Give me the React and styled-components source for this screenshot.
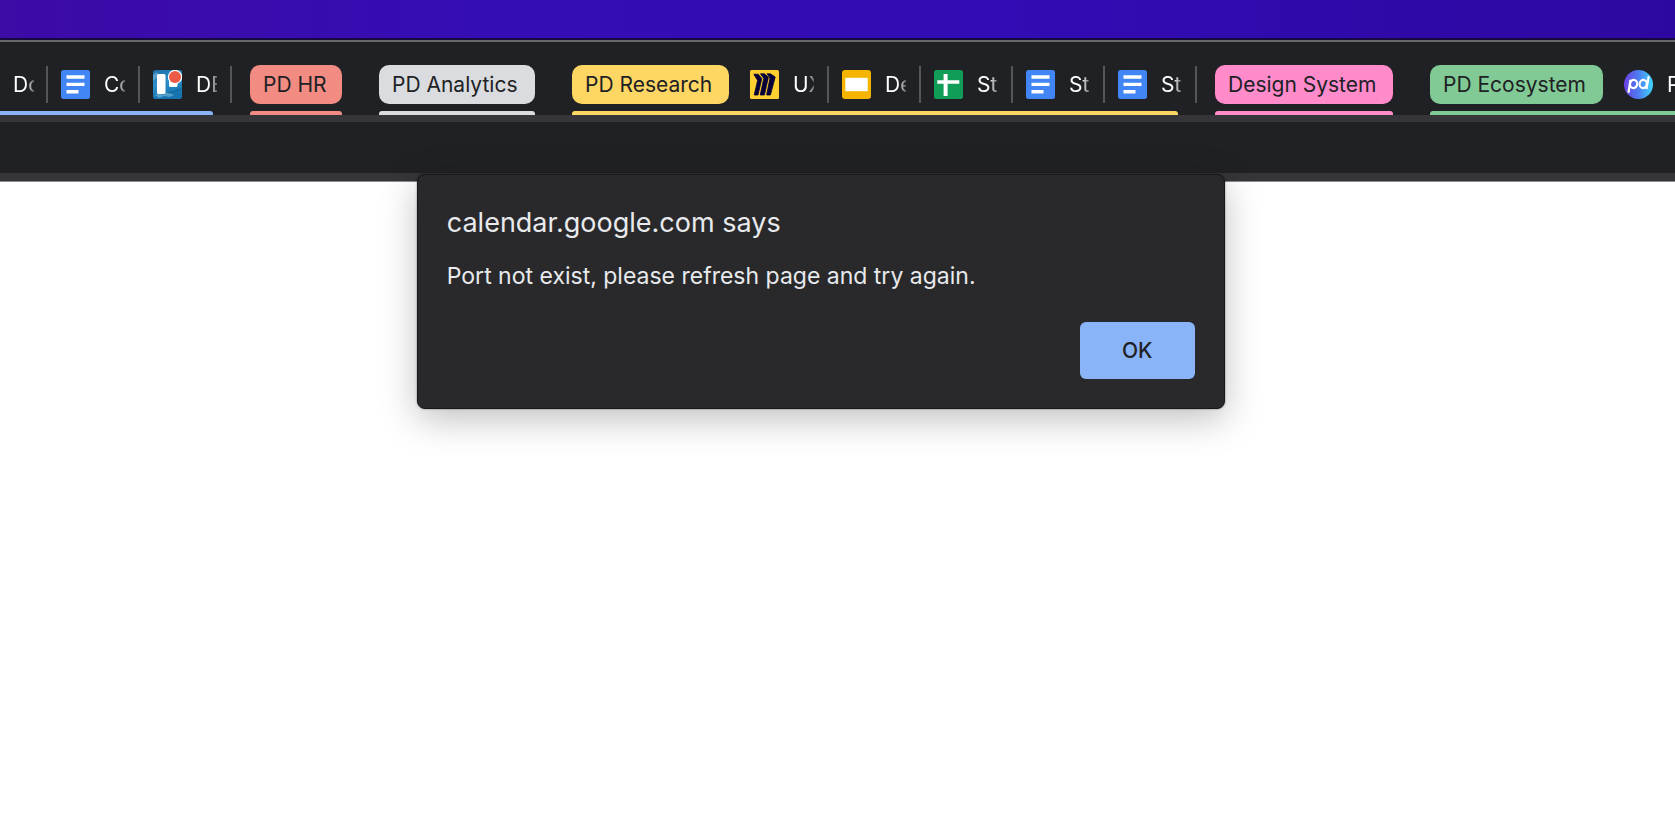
import styled, { createGlobalStyle } from 'styled-components';

const DocsIcon = () => (
  <Favicon viewBox='0 0 29 29' aria-hidden='true'>
    <rect width='29' height='29' rx='2.5' fill='#4285f4' />
    <path d='M5.5 5.2h18v3.6h-18zM5.5 12.7h18v3.4h-18zM5.5 20h12v3.4h-12z' fill='#fff' />
  </Favicon>
);

const SlidesIcon = () => (
  <Favicon viewBox='0 0 29 29' aria-hidden='true'>
    <rect width='29' height='29' rx='3' fill='#f5b400' />
    <rect x='3.3' y='7.8' width='22.4' height='13.4' fill='#fff' />
  </Favicon>
);

const SheetsIcon = () => (
  <Favicon viewBox='0 0 29 29' aria-hidden='true'>
    <rect width='29' height='29' rx='2.5' fill='#109d58' />
    <path d='M9.6 4h4v22h-4zM3.3 10.2h22v3.6h-22z' fill='#fff' />
  </Favicon>
);

const MiroIcon = () => (
  <Favicon viewBox='0 0 29 29' aria-hidden='true'>
    <rect width='29' height='29' rx='1.5' fill='#ffd02f' />
    <path
      d='M17 3.8h3.4l4.8 3.2-4.8 18h-3.8l3.4-17zM10.4 3.8h4l4 3.4-4 17.8h-4.2l3.6-16.6zM3.8 4.2h4.4l3.6 4.4-3.8 16.4H4.2l3.4-14.6z'
      fill='#050038'
      stroke='#050038'
      strokeWidth='.8'
      strokeLinejoin='round'
    />
  </Favicon>
);

const TrelloIcon = () => (
  <Favicon viewBox='0 0 29 29' aria-hidden='true'>
    <defs>
      <linearGradient id='board' x1='0' y1='0' x2='.3' y2='1'>
        <stop offset='0' stopColor='#1d6fa8' />
        <stop offset='.5' stopColor='#2c8fc9' />
        <stop offset='1' stopColor='#1573b0' />
      </linearGradient>
    </defs>
    <rect width='29' height='29' rx='2.5' fill='url(#board)' />
    <path d='M0 5l4-3 2 4-6 5zM2 25l5-2 3 2 5-3 6 3-4 2-6-1-5 2z' fill='#8cc3e3' opacity='.5' />
    <path d='M14 22l6-1 8-3v2l-8 3-5 1z' fill='#0b5488' opacity='.4' />
    <rect x='4' y='4' width='8.5' height='20' rx='1.5' fill='#fff' />
    <rect x='16' y='4' width='8.5' height='13' rx='1.5' fill='#fff' />
    <circle cx='22' cy='7' r='7.2' fill='#fff' />
    <circle cx='22' cy='7' r='6' fill='#eb5a46' />
  </Favicon>
);

const PandaIcon = () => (
  <Favicon viewBox='0 0 29 29' aria-hidden='true'>
    <defs>
      <linearGradient id='panda' x1='0' y1='.5' x2='1' y2='.5'>
        <stop offset='0' stopColor='#6a40e6' />
        <stop offset='.5' stopColor='#4d7df0' />
        <stop offset='1' stopColor='#3fd6fb' />
      </linearGradient>
    </defs>
    <circle cx='14.5' cy='14.5' r='14.5' fill='url(#panda)' />
    <g fill='none' stroke='#fff' strokeWidth='2.2' strokeLinecap='round'>
      <path d='M6.4 10.5L4.6 22' />
      <ellipse cx='9.6' cy='14' rx='3.6' ry='4.1' transform='rotate(12 9.6 14)' />
      <ellipse cx='19.2' cy='14' rx='3.6' ry='4.1' transform='rotate(12 19.2 14)' />
      <path d='M24.6 7L22.6 18.2' />
    </g>
  </Favicon>
);

const groups = [
  {
    color: '#8ab4f8',
    tabs: [
      { title: 'Do' },
      { title: 'Co', Icon: DocsIcon },
      { title: 'DE', Icon: TrelloIcon },
    ],
  },
  { name: 'PD HR', color: '#f28b82', width: 92 },
  { name: 'PD Analytics', color: '#dadce0', width: 156 },
  {
    name: 'PD Research',
    color: '#fdd663',
    width: 157,
    tabs: [
      { title: 'UX', Icon: MiroIcon },
      { title: 'De', Icon: SlidesIcon },
      { title: 'St', Icon: SheetsIcon },
      { title: 'St', Icon: DocsIcon },
      { title: 'St', Icon: DocsIcon },
    ],
  },
  { name: 'Design System', color: '#ff8bcb', width: 178 },
  {
    name: 'PD Ecosystem',
    color: '#81c995',
    width: 173,
    tabs: [{ title: 'PD', Icon: PandaIcon }],
  },
];

const TabGroup = ({ group }) => {
  const { name, color, width, tabs = [] } = group;

  return (
    <Group>
      <GroupRow>
        {name && (
          <GroupName type='button' $color={color} $width={width}>
            {name}
          </GroupName>
        )}
        {tabs.length > 0 && (
          <Tabs $afterName={Boolean(name)}>
            {tabs.map(({ title, Icon }, i) => (
              <Tab type='button' key={i} $bare={!Icon}>
                {Icon && <Icon />}
                <TabTitle>{title}</TabTitle>
              </Tab>
            ))}
          </Tabs>
        )}
      </GroupRow>
      <Underline $color={color} $named={Boolean(name)} />
    </Group>
  );
};

const App = () => (
  <Page>
    <GlobalStyle />
    <Desktop />
    <TabStrip>
      {groups.map((group, i) => (
        <TabGroup group={group} key={i} />
      ))}
    </TabStrip>
    <Toolbar />
    <Content>
      <Alert role='alertdialog' aria-labelledby='alert-title' aria-describedby='alert-text'>
        <AlertTitle id='alert-title'>calendar.google.com says</AlertTitle>
        <AlertText id='alert-text'>Port not exist, please refresh page and try again.</AlertText>
        <OkButton type='button'>OK</OkButton>
      </Alert>
    </Content>
  </Page>
);

const GlobalStyle = createGlobalStyle`
  * {
    box-sizing: border-box;
  }

  body {
    margin: 0;
    background: #fff;
    font-family: Inter, 'Liberation Sans', sans-serif;
  }

  button {
    padding: 0;
    border: 0;
    background: none;
    font-family: inherit;
    cursor: pointer;
  }
`;

const Page = styled.div`
  display: flex;
  flex-direction: column;
  min-height: 100vh;
  overflow: hidden;
`;

const Desktop = styled.div`
  height: 40px;
  background: linear-gradient(90deg, #3d0ba6, #350db4 28%, #320cb4 60%, #2d08a0);
  border-bottom: 2px solid #15093f;
`;

const TabStrip = styled.nav`
  display: flex;
  gap: 37px;
  height: 75px;
  padding-top: 23px;
  background: #202124;
  border-top: 2px solid #68686b;
  overflow: hidden;
`;

const Group = styled.div`
  display: flex;
  flex: none;
  flex-direction: column;
  justify-content: space-between;
  height: 50px;
`;

const GroupRow = styled.div`
  display: flex;
  align-items: flex-start;
`;

const Underline = styled.div`
  height: 4px;
  border-radius: ${({ $named }) => ($named ? 3 : 0)}px 3px 0 0;
  background: ${({ $color }) => $color};
`;

const GroupName = styled.button`
  flex: none;
  width: ${({ $width }) => $width}px;
  height: 39px;
  padding-left: 13px;
  border-radius: 10px;
  background: ${({ $color }) => $color};
  color: #202124;
  font-size: 21px;
  line-height: 39px;
  text-align: left;
  white-space: nowrap;
`;

const Tabs = styled.div`
  display: flex;
  margin-left: ${({ $afterName }) => ($afterName ? 8 : 0)}px;
  margin-right: -19px;
`;

const Tab = styled.button`
  display: flex;
  flex: none;
  align-items: center;
  gap: 14px;
  width: ${({ $bare }) => ($bare ? 48 : 92)}px;
  height: 37px;
  margin-top: 1px;
  padding-left: 13px;
  border-right: 2px solid #55565a;
`;

const TabTitle = styled.span`
  width: 21px;
  overflow: hidden;
  color: #fff;
  font-size: 21px;
  line-height: 37px;
  text-align: left;
  white-space: nowrap;
  mask-image: linear-gradient(90deg, #000 60%, rgba(0, 0, 0, 0.3));
`;

const Favicon = styled.svg`
  flex: none;
  width: 29px;
  height: 29px;
`;

const Toolbar = styled.div`
  height: 67px;
  background: #202124;
  border-top: 7px solid #36363a;
  border-bottom: 9px solid #36363a;
`;

const Content = styled.main`
  position: relative;
  flex: 1;
  border-top: 1px solid #8b898d;
  margin-top: -1px;
`;

const Alert = styled.section`
  position: absolute;
  top: -8px;
  left: 49%;
  display: flex;
  flex-direction: column;
  width: 808px;
  max-width: 96%;
  padding: 32px 29px 29px;
  border: 1px solid #18181a;
  border-radius: 8px;
  background: #29292b;
  color: #e8eaed;
  box-shadow: 0 10px 36px rgba(0, 0, 0, 0.25), 0 0 2px rgba(0, 0, 0, 0.5);
  transform: translateX(-50%);
`;

const AlertTitle = styled.h1`
  margin: 0 0 23px;
  font-size: 27px;
  font-weight: 400;
  line-height: 32px;
`;

const AlertText = styled.p`
  margin: 0 0 32px;
  font-size: 23px;
  line-height: 28px;
`;

const OkButton = styled.button`
  align-self: flex-end;
  width: 115px;
  height: 57px;
  border-radius: 6px;
  background: #8ab4f8;
  color: #202124;
  font-size: 21px;
  font-weight: 500;
`;

export default App;
